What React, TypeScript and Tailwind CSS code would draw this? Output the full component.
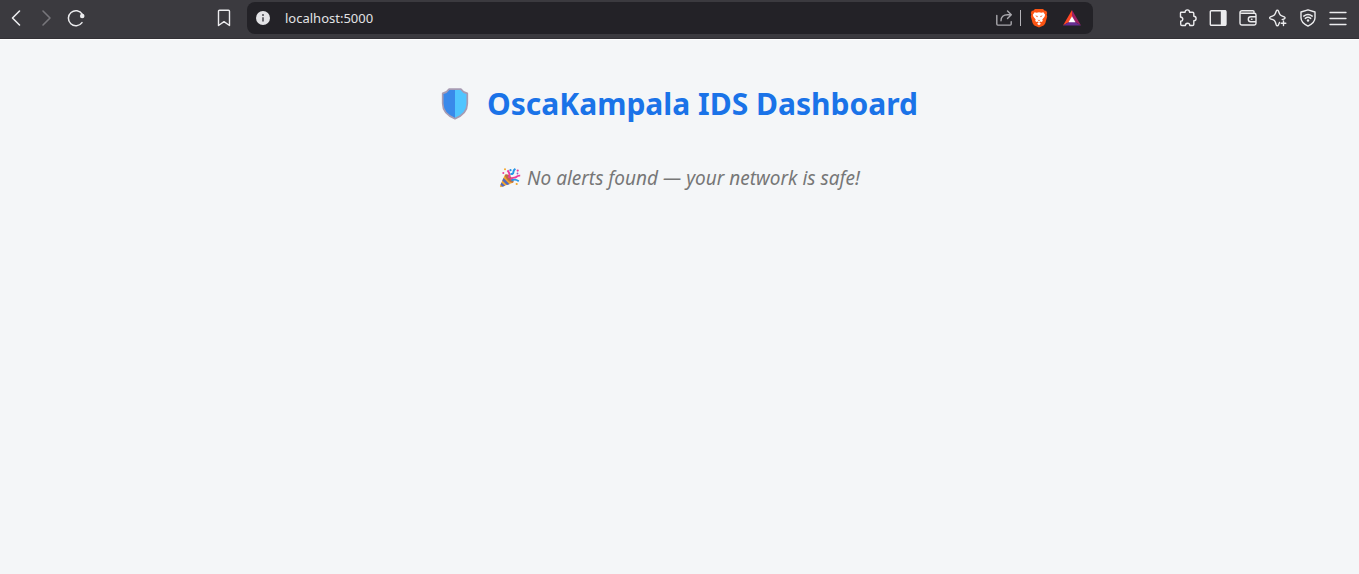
import type { ReactNode } from "react";

function ToolButton({ label, children }: { label: string; children: ReactNode }) {
  return (
    <button
      type="button"
      aria-label={label}
      className="flex h-8 w-[30px] shrink-0 items-center justify-center text-[#ececee]"
    >
      {children}
    </button>
  );
}

function Glyph({ children, className = "" }: { children: ReactNode; className?: string }) {
  return (
    <svg
      viewBox="0 0 20 20"
      fill="none"
      stroke="currentColor"
      strokeWidth="1.4"
      strokeLinecap="round"
      strokeLinejoin="round"
      aria-hidden="true"
      className={`size-5 ${className}`}
    >
      {children}
    </svg>
  );
}

function BrowserBar() {
  return (
    <header className="flex h-10 items-start border-b border-white bg-[#3b3a3f] px-px pt-0.5 shadow-[inset_0_-1px_0_#333136]">
      <nav aria-label="History" className="flex w-[246px] shrink-0 justify-between pr-2">
        <div className="flex">
          <ToolButton label="Back">
            <Glyph>
              <path d="M13.5 3 6.5 10l7 7" strokeWidth="1.6" />
            </Glyph>
          </ToolButton>
          <ToolButton label="Forward">
            <Glyph className="text-[#77767b]">
              <path d="m7 3 7 7-7 7" strokeWidth="1.6" />
            </Glyph>
          </ToolButton>
          <ToolButton label="Reload">
            <Glyph>
              <path d="M16.2 6.2A7.5 7.5 0 1 0 16 14.6" strokeWidth="1.5" />
              <circle cx="16.2" cy="8" r="2.3" fill="currentColor" stroke="none" />
            </Glyph>
          </ToolButton>
        </div>
        <ToolButton label="Bookmark this page">
          <Glyph>
            <path d="M5.5 2.3h9a1 1 0 0 1 1 1v14.2L10 13.7l-5.5 3.8V3.3a1 1 0 0 1 1-1Z" />
          </Glyph>
        </ToolButton>
      </nav>

      <div className="flex h-8 min-w-0 flex-1 items-center rounded-lg bg-[#232227]">
        <button type="button" aria-label="Site information" className="flex w-8 shrink-0 items-center justify-center">
          <svg viewBox="0 0 14 14" className="size-3.5" aria-hidden="true">
            <circle cx="7" cy="7" r="7" fill="#e3e3e6" />
            <path d="M7 6.2v4.3" stroke="#4b4a50" strokeWidth="1.6" />
            <circle cx="7" cy="4" r="1" fill="#4b4a50" />
          </svg>
        </button>
        <input
          type="text"
          aria-label="Address"
          defaultValue="localhost:5000"
          className="min-w-0 flex-1 bg-transparent pt-px pl-1.5 font-['Noto_Sans','Open_Sans',sans-serif] text-[13px] text-[#e2e2e5] outline-none"
        />
        <button type="button" aria-label="Share" className="flex w-8 shrink-0 items-center justify-center text-[#a9a8ad]">
          <Glyph>
            <path d="M2.8 7.5v8.6a1 1 0 0 0 1 1h12.400a1 1 0 0 0 1-1v-2.300" />
            <path d="M13.500 3 17.300 6.800 13.500 10.600M17 6.800h-3.500c-4 0-6.500 2.200-6.500 6" />
          </Glyph>
        </button>
        <span className="h-4 w-px shrink-0 bg-[#b4b3b8]" />
        <button type="button" aria-label="Brave Shields" className="flex w-9 shrink-0 items-center justify-center">
          <svg viewBox="0 0 18 20" className="h-5 w-[18px]" aria-hidden="true">
            <path d="M5 1h8l1.8 1.8 1.4-.1 1 2.4-.5 1.5.5 2-1.8 6.5c-.3 1-1 1.8-1.8 2.3L9 19.500l-4.600-2.100c-.8-.5-1.500-1.300-1.800-2.300L.8 8.600l.5-2L.8 5.100l1-2.400 1.400.1L5 1Z" fill="#fb5413" />
            <path d="m4.600 4.200 2 .5L9 4.300l2.400.4 2-.5 1.700 2.500-.6 2-2.200 2.700.5 1.300-1 1.400-1.300-.5L9 15l-1.500-1.400-1.300.5-1-1.400.5-1.300-2.200-2.700-.6-2 1.700-2.500Z" fill="#fff" />
            <path d="m5.200 7.400 2.600.6-.5 1.300ZM12.800 7.400l-2.600.6.5 1.300ZM7.600 11.500 9 12.300l1.400-.8L9 13.400Z" fill="#fb5413" />
            <path d="m9 14.500 2 1.200-2 1.500-2-1.500Z" fill="#fff" />
          </svg>
        </button>
        <button type="button" aria-label="Brave Rewards" className="mr-1.5 flex w-[30px] shrink-0 items-center justify-center">
          <svg viewBox="0 0 18 16" className="h-4 w-[18px]" aria-hidden="true">
            <path d="M9 0 0 15.500 6 12 9 6.700Z" fill="#ff4724" />
            <path d="m9 0 9 15.500-6-3.500-3-5.300Z" fill="#9e1f63" />
            <path d="M0 15.500 6 12h6l6 3.500Z" fill="#662d91" />
            <path d="m9 6.200 3.500 6h-7Z" fill="#fff" />
          </svg>
        </button>
      </div>

      <nav aria-label="Browser tools" className="flex w-[265px] shrink-0 justify-end pr-[5px]">
        <ToolButton label="Extensions">
          <Glyph>
            <path d="M3.200 4.300h3.900C7.100 2.700 8 1.900 9.300 1.900s2.300.8 2.300 2.400h2.900c.8 0 1.300.5 1.300 1.300v2.700c1.500 0 2.300.9 2.300 2.200s-.8 2.200-2.300 2.200v3.500c0 .8-.5 1.300-1.300 1.300h-2.700c0-1.500-.9-2.300-2.200-2.300s-2.200.8-2.200 2.300H4c-.8 0-1.300-.5-1.300-1.300v-2.900c1.500-.2 2.100-1 2.100-2.100S4 9.200 2.500 9V5c0-.4.300-.7.700-.7Z" />
          </Glyph>
        </ToolButton>
        <ToolButton label="Side panel">
          <Glyph>
            <rect x="2.3" y="2.7" width="15.6" height="14.6" rx="1" />
            <path d="M13.500 3h4v14h-4Z" fill="currentColor" />
          </Glyph>
        </ToolButton>
        <ToolButton label="Wallet">
          <Glyph>
            <path d="M16 5V3.800c0-.7-.4-1.100-1.100-1.100H4a2 2 0 0 0-2 2v10.600c0 1 .7 1.700 1.700 1.700h12.600c1 0 1.700-.7 1.700-1.700V7c0-1-.7-1.700-1.700-1.700H3.800C2.800 5.300 2 5 2 4.300M18 8.800h-5.200a2.500 2.500 0 0 0 0 5H18M13.500 11.300h.5" />
          </Glyph>
        </ToolButton>
        <ToolButton label="Leo AI">
          <Glyph>
            <path d="M11.500 14.500 10.400 17c-.4 1-1.700 1-2.100 0l-1-2.900a4 4 0 0 0-2.400-2.400L2.400 10.800c-1-.4-1-1.600 0-2l2.500-.9a4 4 0 0 0 2.400-2.400l1-2.600c.4-1 1.700-1 2.100 0l1 2.600a4 4 0 0 0 2.400 2.400l2.500.9c1 .4 1 1.600 0 2l-2.100.8M15.500 13v4.600M13.200 15.300h4.600" />
          </Glyph>
        </ToolButton>
        <ToolButton label="VPN">
          <Glyph>
            <path d="M10 1.800 17 4v5.800c0 3.700-2.800 6.300-7 8.300-4.200-2-7-4.600-7-8.300V4l7-2.200Z" />
            <path d="M5.800 8.100c2.500-2 5.900-2 8.400 0M7.300 10.400c1.600-1.300 3.800-1.300 5.400 0" strokeWidth="1.500" />
            <circle cx="10" cy="12.500" r="1.200" fill="currentColor" stroke="none" />
          </Glyph>
        </ToolButton>
        <ToolButton label="Menu">
          <Glyph>
            <path d="M2 4.500h16M2 10.500h16M2 16.500h16" strokeWidth="1.300" />
          </Glyph>
        </ToolButton>
      </nav>
    </header>
  );
}

function Shield() {
  return (
    <svg viewBox="0 0 28 32" role="img" aria-label="Shield" className="h-8 w-7 shrink-0">
      <path d="M8 1.200h12c1.500 2.400 3.200 3.500 6.300 4.200v10.200c0 7-5.400 12.400-12.300 15.200C7.100 28 1.700 22.600 1.700 15.600V5.400C4.800 4.700 6.500 3.600 8 1.200Z" fill="#3989ea" />
      <path d="M14 1.200h6c1.500 2.400 3.200 3.500 6.300 4.200v10.200c0 7-5.400 12.400-12.300 15.200Z" fill="#50c5ff" />
      <path d="M8 1.200h12c1.500 2.400 3.200 3.500 6.300 4.200v10.200c0 7-5.400 12.400-12.300 15.200C7.100 28 1.700 22.600 1.700 15.600V5.400C4.800 4.700 6.500 3.600 8 1.200Z" fill="none" stroke="#a69bb3" strokeWidth="1.700" strokeLinejoin="round" />
    </svg>
  );
}

function PartyPopper() {
  return (
    <svg viewBox="0 0 22 22" role="img" aria-label="Party popper" className="size-[22px] shrink-0">
      <path d="M6 7.500 1 18.700c-.3 1 .5 1.800 1.500 1.400L14.500 15.500Z" fill="#f4a62a" />
      <path d="m4.600 11 6 6.200-2.600.9-4.700-4.500ZM2.500 15.500l3.600 3.300-2.500.9-2.100-2Z" fill="#5268bd" />
      <ellipse cx="10.300" cy="11.400" rx="2.300" ry="5.600" transform="rotate(-46 10.300 11.400)" fill="#b86d49" />
      <path d="M9.500 11c1.500-2 1.300-5-1-7.600" fill="none" stroke="#ee3c9b" strokeWidth="2" />
      <path d="M11.500 6.500c1.500 1 2.800.4 2.900-1.500 0-1.500 1-2.500 2-3.200" fill="none" stroke="#2495e6" strokeWidth="2" />
      <path d="M11.500 12.500c2.500-3 4.200-1 5.700-2.500s2-1.500 4-1.300" fill="none" stroke="#ee3c9b" strokeWidth="1.800" />
      <path d="M12.500 13.500c2-1.200 5.200-.8 7.300.7" fill="none" stroke="#2495e6" strokeWidth="1.800" />
      <circle cx="6" cy="2.300" r="1" fill="#f4a62a" />
      <circle cx="11.500" cy="3.200" r="1.100" fill="#2495e6" />
      <circle cx="18.700" cy="3.600" r="1.100" fill="#ee3c9b" />
      <circle cx="4.300" cy="6" r="1" fill="#ee3c9b" />
      <circle cx="18.500" cy="6.500" r=".9" fill="#8a63c7" />
      <circle cx="17.700" cy="17" r="1.100" fill="#f4a62a" />
    </svg>
  );
}

export default function App() {
  return (
    <div className="flex min-h-screen flex-col bg-[#f4f6f8] font-['Noto_Sans','Open_Sans',sans-serif]">
      <BrowserBar />
      <main className="flex flex-1 flex-col items-center px-6 pt-10">
        <h1 className="flex items-center gap-[18px] text-3xl leading-12 font-bold text-[#1a73e8]">
          <Shield />
          OscaKampala IDS Dashboard
        </h1>
        <p className="mt-9 flex items-center gap-1.5 text-[19px] leading-7 text-[#777777] italic">
          <PartyPopper />
          No alerts found — your network is safe!
        </p>
      </main>
    </div>
  );
}
